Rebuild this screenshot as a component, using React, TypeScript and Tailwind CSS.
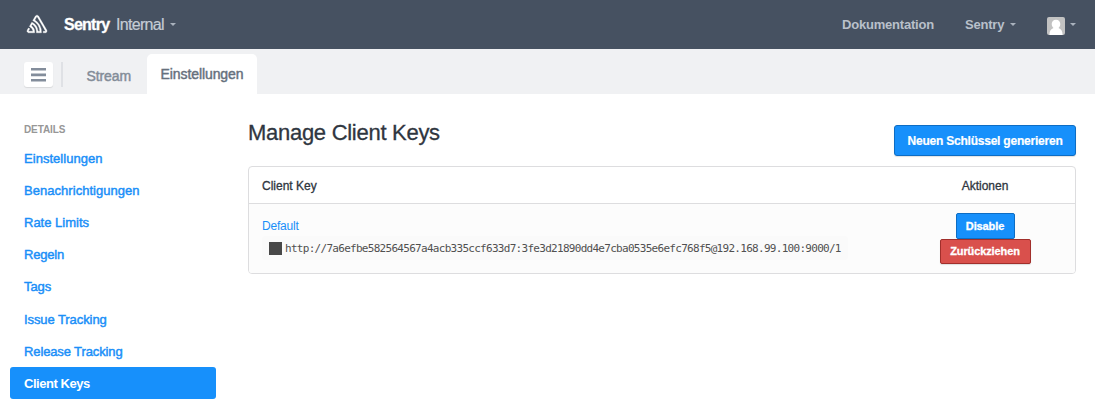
import React from "react";
import { SiSentry } from "react-icons/si";

const medium = "[-webkit-text-stroke:0.45px_currentColor]";

const links = [
  { label: "Einstellungen", spacing: "tracking-[0.04px]" },
  { label: "Benachrichtigungen", spacing: "tracking-[0.04px]" },
  { label: "Rate Limits", spacing: "tracking-[0px]" },
  { label: "Regeln", spacing: "tracking-[-0.2px]" },
  { label: "Tags", spacing: "tracking-[-0.1px]" },
  { label: "Issue Tracking", spacing: "tracking-[-0.08px]" },
  { label: "Release Tracking", spacing: "tracking-[-0.12px]" },
];

function Caret() {
  return (
    <svg width="6" height="3" viewBox="0 0 6 3" className="block shrink-0 fill-[#a9b2bd]">
      <path d="M0 0h6L3 3z" />
    </svg>
  );
}

export default function App() {
  return (
    <div className="flex h-[410px] w-[1095px] flex-col overflow-hidden bg-white font-['Liberation_Sans',Arial,sans-serif] text-[13px] text-[#2f3640]">
      <header className="flex h-[49px] shrink-0 items-center bg-[#465161] pl-[27px] pr-[19px]">
        <SiSentry size={20} className="-mt-px overflow-visible fill-white stroke-white stroke-[0.4]" />
        <span className="ml-[17px] w-[52px] whitespace-nowrap text-[16px] font-bold tracking-[-0.75px] text-white [-webkit-text-stroke:0.3px_currentColor]">Sentry</span>
        <span className="w-[54px] whitespace-nowrap text-[16px] tracking-[-0.7px] text-[#c5ccd5] [-webkit-text-stroke:0.2px_currentColor]">Internal</span>
        <Caret />
        <nav className="ml-auto flex items-center text-[13px] font-bold tracking-[-0.2px] text-[#b9c0ca]">
          <span className="w-[123px]">Dokumentation</span>
          <span className="w-[45px]">Sentry</span>
          <Caret />
          <span className="ml-[31px] mr-[5px] mt-[3px] block h-[18px] w-[18px] overflow-hidden rounded-[2px] bg-[#c2c2c2]">
            <svg width="18" height="18" viewBox="0 0 18 18" fill="#fff">
              <path d="M9 2.700c2.700 0 4.300 1.900 4.300 4.400 0 1.800-.8 3.100-1.800 4 2.600.9 4 3 4.100 6.900H2.400c.1-3.900 1.500-6 4.100-6.900-1-.9-1.800-2.200-1.800-4 0-2.500 1.600-4.400 4.300-4.400z" />
            </svg>
          </span>
          <Caret />
        </nav>
      </header>

      <div className="flex h-[45px] shrink-0 items-end bg-[#f0f1f3] pl-6">
        <button className="mb-[7px] flex h-[25px] w-[29px] flex-col items-center justify-center gap-[2.5px] rounded-[3px] bg-white shadow-[0_1px_1px_rgba(0,0,0,0.1)]">
          <svg width="15" height="14" viewBox="0 0 15 14" fill="#838d9b">
            <path d="M0 0h15v2.600H0zM0 5.600h15v2.600H0zM0 11h15v2.600H0z" />
          </svg>
        </button>
        <i className="mb-[7px] ml-2 h-[25px] w-[2px] bg-[#dfe1e5]" />
        <span className={`mb-[9px] ml-[23.500px] w-[60.500px] text-[14px] leading-[18px] tracking-[-0.1px] text-[#838c98] ${medium}`}>Stream</span>
        <span className={`flex h-10 w-[110px] items-center justify-center rounded-t-[5px] bg-white text-[14px] tracking-[-0.1px] text-[#66707d] ${medium}`}>
          Einstellungen
        </span>
      </div>

      <main className="flex">
        <aside className="w-[248px] pl-[10px] pt-[29px]">
          <h6 className="pl-[14px] text-[10px] font-bold leading-[14px] tracking-[-0.1px] text-[#979797]">DETAILS</h6>
          <ul className="mt-[5px]">
            {links.map(({ label, spacing }) => (
              <li key={label} className={`flex h-[32.150px] items-center pl-[14px] pt-px text-[#1a8ff8] ${medium} ${spacing}`}>
                {label}
              </li>
            ))}
            <li className="flex h-8 w-[206px] items-center rounded-[3px] bg-[#1790fb] pl-[14px] pt-px font-bold tracking-[-0.45px] text-white">
              Client Keys
            </li>
          </ul>
        </aside>

        <section className="w-[828px] pt-[25px]">
          <div className="flex h-[47px] justify-between">
            <h2 className="text-[22px] leading-[27px] tracking-[-0.28px] [-webkit-text-stroke:0.3px_currentColor]">Manage Client Keys</h2>
            <button className="mt-[6px] h-[31px] w-[182px] whitespace-nowrap rounded-[3px] border border-[#0d6dc4] bg-[#1790fb] text-[12px] font-bold tracking-[-0.22px] text-white shadow-[0_1px_1px_rgba(0,0,0,0.12)] [-webkit-text-stroke:0.2px_currentColor]">
              Neuen Schlüssel generieren
            </button>
          </div>
          <div className="h-[108px] overflow-hidden rounded-[4px] border border-[#dddddf]">
            <div className="flex h-[37px] items-center border-b border-[#dddddf] pl-[13px] pt-[2px] text-[12px] [-webkit-text-stroke:0.3px_currentColor]">
              <span className="w-[633px]">Client Key</span>
              <span className="w-[180px] text-center">Aktionen</span>
            </div>
            <div className="flex h-[69px] bg-[#fcfcfc] pl-[13px]">
              <div className="w-[633px] pt-[15px]">
                <div className="text-[12px] leading-[14px] tracking-[-0.2px] text-[#1a8ff8]">Default</div>
                <div className="mt-[3px] flex h-[24px] w-[586px] items-center rounded-[3px] bg-[#fafafa] pl-[7px]">
                  <i className="mr-[3px] h-[13px] w-[13px] bg-[#484848]" />
                  <code className="whitespace-nowrap pt-[2px] font-['DejaVu_Sans_Mono',monospace] text-[11px] tracking-[-0.710px] text-[#505050]">
                    http://7a6efbe582564567a4acb335ccf633d7:3fe3d21890dd4e7cba0535e6efc768f5@192.168.99.100:9000/1
                  </code>
                </div>
              </div>
              <div className="flex w-[180px] flex-col items-center pt-[9px] text-[11px] font-bold tracking-[-0.12px] text-white [-webkit-text-stroke:0.3px_currentColor]">
                <button className="h-[26px] w-[59px] rounded-[2px] border border-[#0d6dc4] bg-[#1790fb]">Disable</button>
                <button className="h-[25px] w-[91px] rounded-[2px] border border-[#a12f2b] bg-[#d9504c] shadow-[0_1px_1px_rgba(0,0,0,0.12)]">Zurückziehen</button>
              </div>
            </div>
          </div>
        </section>
      </main>
    </div>
  );
}
